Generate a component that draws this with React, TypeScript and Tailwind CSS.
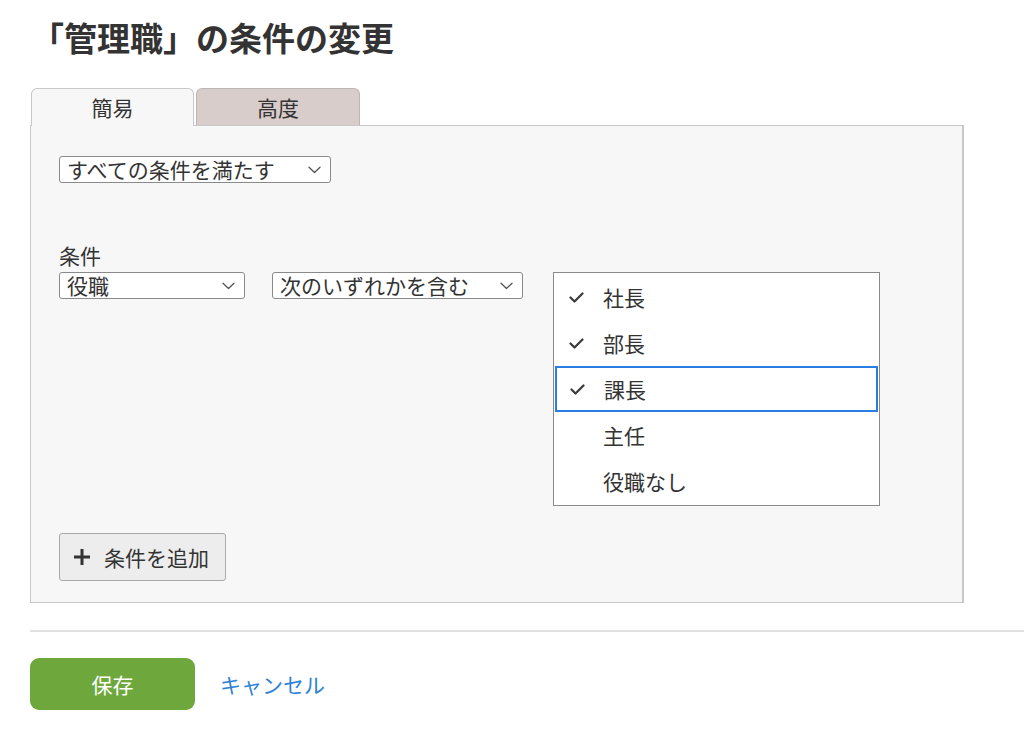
import React from "react";

const Chevron = () => (
  <svg width="13" height="8" viewBox="0 0 13 8" fill="none" stroke="#555" strokeWidth="1.3" strokeLinecap="round" strokeLinejoin="round">
    <path d="M1 1.2 L6.5 6.5 L12 1.2" />
  </svg>
);

const Check = () => (
  <svg width="15" height="11" viewBox="0 0 15 11" fill="none" stroke="#3a3a3a" strokeWidth="2.2" strokeLinecap="round" strokeLinejoin="round">
    <path d="M1.5 5.5 L5.5 9.5 L13.5 1.5" />
  </svg>
);

const Plus = () => (
  <svg width="18" height="18" viewBox="0 0 18 18" fill="none" stroke="#333" strokeWidth="3">
    <path d="M9 1 V17 M1 9 H17" />
  </svg>
);

function Select({ label, w }: { label: string; w: string }) {
  return (
    <div className={`flex items-center justify-between h-[27px] border border-[#8a8a8a] rounded-[3px] bg-white pl-[7px] pr-[9px] ${w}`}>
      <span className="text-[21px] leading-none text-[#333]">{label}</span>
      <Chevron />
    </div>
  );
}

const items = [
  { t: "社長", c: true, s: false },
  { t: "部長", c: true, s: false },
  { t: "課長", c: true, s: true },
  { t: "主任", c: false, s: false },
  { t: "役職なし", c: false, s: false },
];

export default function App() {
  return (
    <div className="w-[1024px] h-[739px] overflow-hidden bg-white font-['Noto_Sans_CJK_JP',sans-serif] text-[#333]">
      <div className="pl-[30px] pt-[21px]">
        <h1 className="h-[32px] leading-[32px] text-[33px] font-bold text-[#333] ml-[1px]">「管理職」の条件の変更</h1>
        <div className="flex gap-[2px] mt-[35px] relative z-10 pl-[1px]">
          <div className="w-[163px] h-[38px] bg-[#f7f7f7] border border-b-0 border-[#c8c8c8] rounded-t-[6px] flex items-center justify-center text-[21px] leading-none">簡易</div>
          <div className="w-[164px] h-[37px] bg-[#d8cdcb] border border-b-0 border-[#bdb5b3] rounded-t-[6px] flex items-center justify-center text-[21px] leading-none">高度</div>
        </div>
        <div className="w-[934px] h-[478px] -mt-px bg-[#f7f7f7] border border-r-2 border-[#c8c8c8] pl-[28px] pt-[30px]">
          <Select label="すべての条件を満たす" w="w-[272px]" />
          <div className="mt-[60px] h-[24px] text-[21px] leading-[24px]">条件</div>
          <div className="mt-[5px] flex items-start">
            <Select label="役職" w="w-[186px]" />
            <Select label="次のいずれかを含む" w="w-[251px] ml-[27px]" />
            <div className="ml-[30px] w-[327px] bg-white border border-[#8a8a8a] py-[1px]">
              {items.map((it) => (
                <div
                  key={it.t}
                  className={`h-[46px] flex items-center ${it.s ? "border-2 border-[#2a7de1] mx-[1px] pl-[13px]" : "pl-[15px]"}`}
                >
                  <div className="w-[34px] flex items-center">{it.c ? <Check /> : null}</div>
                  <span className="text-[21px] leading-none">{it.t}</span>
                </div>
              ))}
            </div>
          </div>
          <div className="mt-[27px] w-[167px] h-[48px] bg-[#ededed] border border-[#a9a9a9] rounded-[3px] flex items-center pl-[13px] gap-[13px]">
            <Plus />
            <span className="text-[21px] leading-none">条件を追加</span>
          </div>
        </div>
        <div className="mt-[27px] h-[2px] bg-[#e2e2e2]" />
        <div className="mt-[26px] flex items-center">
          <div className="w-[165px] h-[52px] bg-[#6ea83d] rounded-[9px] flex items-center justify-center text-white text-[21px] leading-none">保存</div>
          <span className="ml-[25px] text-[21px] leading-none text-[#2f82d6]">キャンセル</span>
        </div>
      </div>
    </div>
  );
}
